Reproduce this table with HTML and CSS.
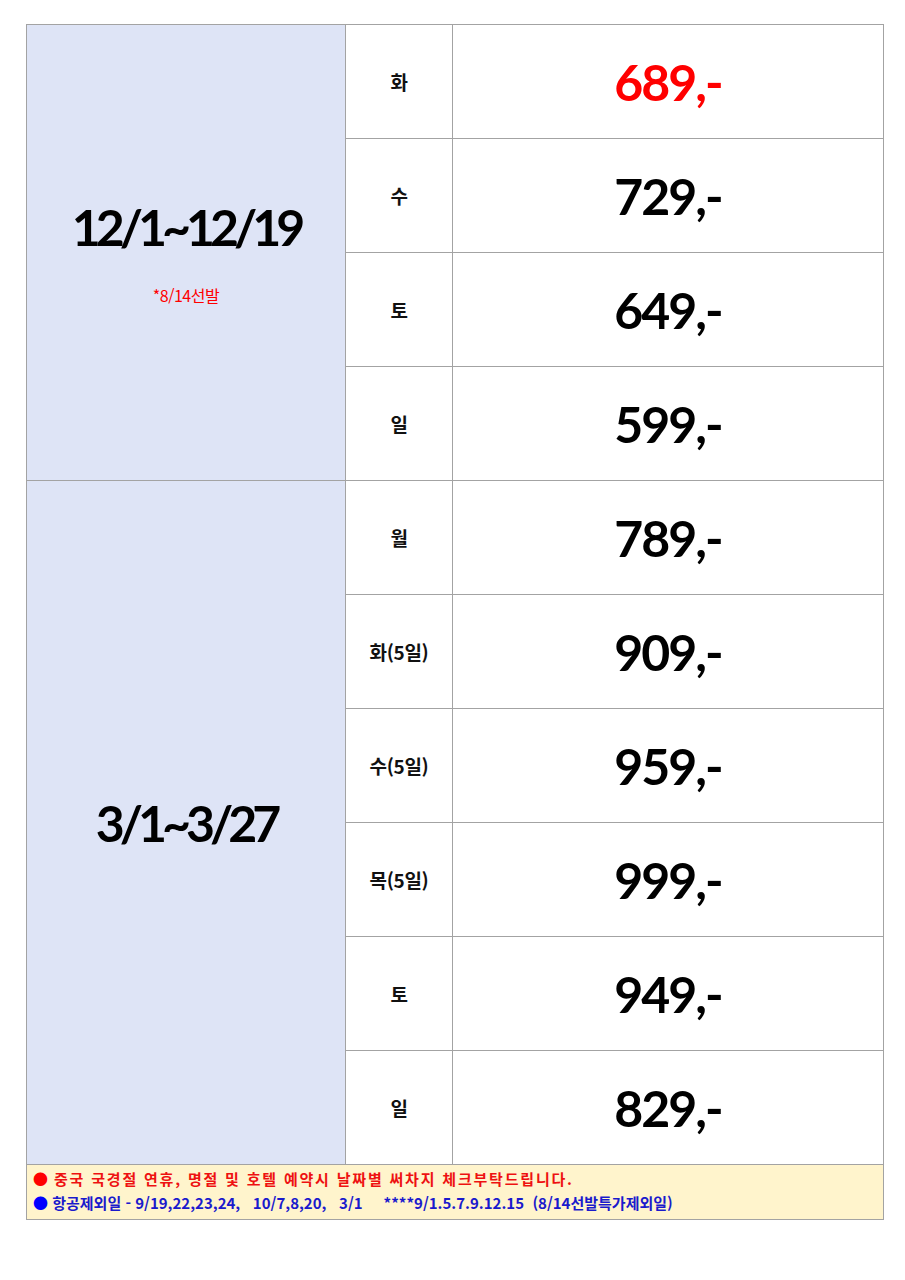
FILE: index.html
```html
<!DOCTYPE html>
<html lang="ko">
<head>
<meta charset="utf-8">
<link rel="stylesheet" href="styles.css">
</head>
<body>
<table class="price-table">
  <tr>
    <td class="period" rowspan="4"><div class="date">12/1~12/19</div><div class="note">*8/14선발</div></td>
    <td class="day">화</td>
    <td class="price red">689,-</td>
  </tr>
  <tr><td class="day">수</td><td class="price">729,-</td></tr>
  <tr><td class="day">토</td><td class="price">649,-</td></tr>
  <tr><td class="day">일</td><td class="price">599,-</td></tr>
  <tr>
    <td class="period" rowspan="6"><div class="date">3/1~3/27</div></td>
    <td class="day">월</td>
    <td class="price">789,-</td>
  </tr>
  <tr><td class="day">화(5일)</td><td class="price">909,-</td></tr>
  <tr><td class="day">수(5일)</td><td class="price">959,-</td></tr>
  <tr><td class="day">목(5일)</td><td class="price">999,-</td></tr>
  <tr><td class="day">토</td><td class="price">949,-</td></tr>
  <tr><td class="day">일</td><td class="price">829,-</td></tr>
  <tr>
    <td class="footer" colspan="3">
      <div class="line line-red"><span class="dot">●</span> 중국 국경절 연휴, 명절 및 호텔 예약시 날짜별 써차지 체크부탁드립니다.</div>
      <div class="line line-blue"><span class="dot">●</span> 항공제외일 - 9/19,22,23,24, &nbsp;&nbsp;10/7,8,20, &nbsp;&nbsp;3/1 &nbsp;&nbsp;&nbsp;&nbsp;****9/1.5.7.9.12.15 &nbsp;(8/14선발특가제외일)</div>
    </td>
  </tr>
</table>
</body>
</html>
```
FILE: styles.css
```css
html, body { margin: 0; padding: 0; background: #fff; }
body { padding: 24px 0 0 26px; font-family: "Noto Sans CJK KR", "Noto Sans", sans-serif; }
.price-table {
  border-collapse: collapse;
  width: 858px;
  table-layout: fixed;
}
.price-table td {
  border: 1px solid #a3a3a3;
  padding: 0;
  text-align: center;
  vertical-align: middle;
}
.period { width: 318px; background: #dee4f6; }
.day { width: 106px; height: 113px; font-size: 19px; font-weight: 700; color: #111; letter-spacing: -0.3px; }
.price { font-family: "Lato", "Noto Sans", sans-serif; font-size: 50px; font-weight: 700; letter-spacing: -2px; color: #000; }
.price.red { color: #ff0000; }
.date { font-family: "Lato", "Noto Sans", sans-serif; font-size: 50px; font-weight: 700; letter-spacing: -5px; line-height: 56px; color: #000; }
.date-short { letter-spacing: -4.5px; }
.note { font-size: 16px; color: #ff0000; margin-top: 28px; letter-spacing: -0.5px; }
.footer { background: #fff4cc; text-align: left !important; padding: 2px 0 4px 6px !important; height: 44px; }
.line { font-size: 15px; font-weight: 700; line-height: 24px; white-space: nowrap; }
.line-red { color: #ee1111; letter-spacing: 1.8px; }
.line-blue { color: #1a1acc; }
.line-red .dot { color: #ff0000; letter-spacing: 0; }
.line-blue .dot { color: #0000ff; }
```
